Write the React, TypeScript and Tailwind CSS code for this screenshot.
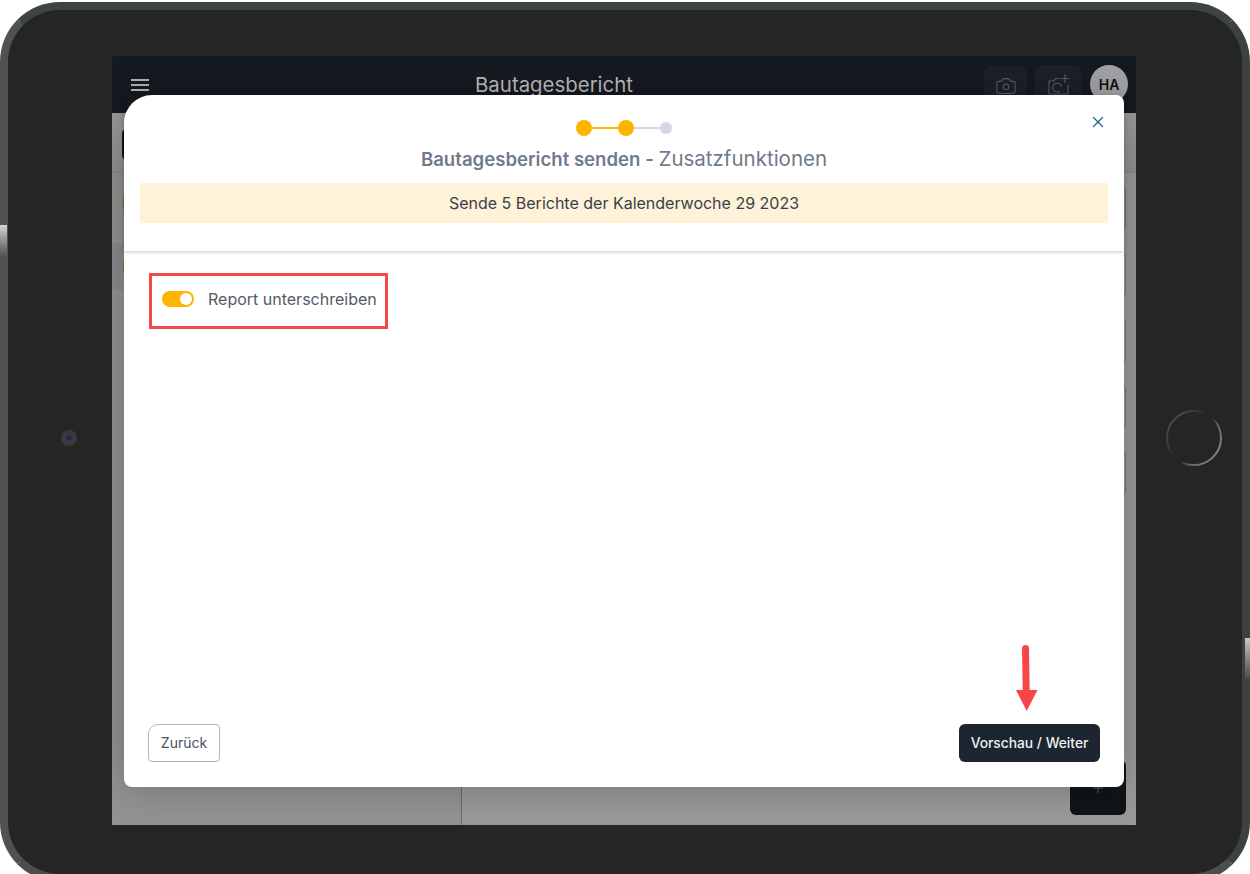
import { Camera, X, Plus } from "lucide-react";

const font = { fontFamily: "Inter, 'Liberation Sans', sans-serif" };

function CameraPlus() {
  return (
    <svg width="24" height="24" viewBox="0 0 24 24" fill="none" stroke="currentColor" strokeWidth="1.2">
      <path d="M12 5.5H8.5L7 8H2v13h19v-9" />
      <path d="M14.5 13.5a4.5 4.5 0 1 0-1.5 4.5" />
      <path d="M18 1v9M13.5 5.5h9" />
    </svg>
  );
}

function BackgroundApp() {
  return (
    <div className="flex flex-col h-full bg-[#999999]">
      <div className="h-[57px] shrink-0 bg-[#151a21] flex items-start justify-between pl-[19px] pr-[8px] pt-[10px] relative">
        <div className="flex flex-col gap-[3px] mt-[13px]">
          <div className="w-[18px] h-[2px] bg-[#b4b4b4]" />
          <div className="w-[18px] h-[2px] bg-[#b4b4b4]" />
          <div className="w-[18px] h-[2px] bg-[#b4b4b4]" />
        </div>
        <div className="absolute left-0 w-[884px] top-[16px] text-center text-[20.4px] leading-[26px] text-[#bdbdbd]">Bautagesbericht</div>
        <div className="flex items-start gap-[8px] mt-[-1px]">
          <div className="w-[43px] h-[40px] mt-[1px] rounded-[8px] bg-[#1b2129] flex justify-center pt-[9px] text-[#595c61]">
            <Camera className="w-[22px] h-[22px]" strokeWidth={1.2} />
          </div>
          <div className="w-[47px] h-[40px] rounded-[8px] bg-[#1b2129] flex justify-center pt-[8px] text-[#595c61]">
            <CameraPlus />
          </div>
          <div className="w-[38px] h-[38px] rounded-full bg-[#a3a3a6] flex items-center justify-center text-[14px] font-semibold text-[#101010]">HA</div>
        </div>
      </div>
      <div className="h-[60px] shrink-0 bg-gradient-to-b from-[#9c9c9e] to-[#8f9092] border-b border-[#868686] pt-[15px] pl-[10px]">
        <div className="w-[20px] h-[33px] bg-[#101216] rounded-[6px]" />
      </div>
      <div className="flex-1 flex min-h-0">
        <div className="w-[350px] shrink-0 border-r border-[#6a6a6a] bg-[#939393]">
          <div className="h-[70px] pl-[11px] pt-[24px]">
            <div className="w-[2px] h-[12px] bg-[#8a6a2c]" />
          </div>
          <div className="h-[47px] bg-[#8a8b8e] pl-[11px] pt-[18px]">
            <div className="w-[2px] h-[12px] bg-[#8a6a2c]" />
          </div>
        </div>
        <div className="flex-1 flex flex-col items-end pr-[10px] pt-[12px] gap-[19px] relative">
          {[47, 47, 47, 47, 48].map((h, i) => (
            <div key={i} className="w-[40px] rounded-[6px] border border-[#77787c]" style={{ height: h }} />
          ))}
          <div className="absolute right-[10px] bottom-[10px] w-[56px] h-[55px] rounded-[6px] bg-[#101419] flex items-center justify-center text-[#5d6064]">
            <Plus className="w-[16px] h-[16px]" strokeWidth={1.5} />
          </div>
        </div>
      </div>
    </div>
  );
}

function Modal() {
  return (
    <div className="absolute left-[12px] top-[39px] w-[1000px] h-[692px] bg-white rounded-tl-[28px] rounded-tr-[8px] rounded-b-[8px] flex flex-col shadow-[0_0_40px_rgba(0,0,0,0.25)]">
      <div className="h-[156px] shrink-0 px-[16px] pt-[25px] relative shadow-[0_1px_4px_rgba(0,0,0,0.22)]">
        <X className="absolute right-[17px] top-[18px] w-[18px] h-[18px] text-[#1f6587]" strokeWidth={1.7} />
        <div className="flex items-center justify-center h-[16px]">
          <div className="w-[16px] h-[16px] rounded-full bg-[#ffb400]" />
          <div className="w-[26px] h-[2px] bg-[#ffb400]" />
          <div className="w-[16px] h-[16px] rounded-full bg-[#ffb400]" />
          <div className="w-[26px] h-[2px] bg-[#d2d7e1]" />
          <div className="w-[12px] h-[12px] rounded-full bg-[#d2d7e1]" />
        </div>
        <div className="mt-[10px] text-center leading-[26px] text-[#6f7a8a]">
          <span className="font-semibold text-[18.6px]">Bautagesbericht senden - </span>
          <span className="text-[20.5px]">Zusatzfunktionen</span>
        </div>
        <div className="mt-[10px] h-[40px] bg-[#fef3d9] flex items-center justify-center text-[16px] text-[#3a4048]">
          Sende 5 Berichte der Kalenderwoche 29 2023
        </div>
      </div>
      <div className="flex-1 min-h-0 flex flex-col justify-between px-[24px] pt-[22px] pb-[25px]">
        <div className="self-start relative left-[1px] flex items-center gap-[14px] h-[56px] pl-[10px] pr-[8px] pb-[5px] border-[3px] border-[#f44848]">
          <div className="w-[32px] h-[16px] rounded-full bg-[#ffb400] flex items-center justify-end pr-[2px]">
            <div className="w-[12px] h-[12px] rounded-full bg-white" />
          </div>
          <span className="text-[16px] text-[#525a66]">Report unterschreiben</span>
        </div>
        <div className="flex items-end justify-between">
          <button className="w-[72px] h-[38px] pb-[1px] rounded-tl-[10px] rounded-tr-[4px] rounded-b-[4px] border border-[#aab5c5] bg-white text-[14px] text-[#4a5160]">Zurück</button>
          <div className="relative">
            <svg className="absolute left-[56px] top-[-80px]" width="24" height="68" viewBox="0 0 24 68">
              <path d="M10.5 4.5 L11.2 47" stroke="#f84646" strokeWidth="7" strokeLinecap="round" fill="none" />
              <path d="M1 46 H22.5 L11.7 67 Z" fill="#f84646" />
            </svg>
            <button className="w-[141px] h-[38px] rounded-[6px] bg-[#1c2530] text-[13.8px] font-medium text-[#eef0f2]">Vorschau / Weiter</button>
          </div>
        </div>
      </div>
    </div>
  );
}

export default function App() {
  return (
    <div className="w-[1250px] h-[874px] bg-white overflow-hidden relative" style={font}>
      <div className="mt-[2px] h-[880px] rounded-[60px] border-[8px] border-t-[#3e4343] border-l-[#4f534f] border-r-[#3c4243] border-b-[#4c4e50] bg-[#252525] pl-[104px] pr-[106px] pt-[46px] pb-[49px] relative">
        <div className="h-[769px] relative overflow-hidden">
          <BackgroundApp />
          <Modal />
        </div>
        {/* camera */}
        <div className="absolute left-[53px] top-[420px] w-[16px] h-[16px] rounded-full bg-[#3a3a3a] flex items-center justify-center">
          <div className="w-[8px] h-[8px] rounded-full bg-[#2a2840] border border-[#3f3a66]" />
        </div>
        {/* home button */}
        <svg className="absolute left-[1157px] top-[399px]" width="58" height="58" viewBox="0 0 58 58" fill="none">
          <defs>
            <linearGradient id="ring" x1="0.1" y1="0.2" x2="0.9" y2="0.8">
              <stop offset="0" stopColor="#4a4a4a" />
              <stop offset="0.22" stopColor="#3a3a3a" />
              <stop offset="0.42" stopColor="#252525" />
              <stop offset="0.55" stopColor="#252525" />
              <stop offset="0.72" stopColor="#666666" />
              <stop offset="1" stopColor="#808080" />
            </linearGradient>
          </defs>
          <circle cx="29" cy="29" r="27" stroke="url(#ring)" strokeWidth="2" />
        </svg>
      </div>
      {/* side buttons */}
      <div className="absolute left-0 top-[225px] w-[7px] h-[32px] bg-gradient-to-b from-[#d4d4d4] to-[#4f534f]" />
      <div className="absolute right-0 top-[638px] w-[5px] h-[40px] bg-gradient-to-b from-[#c8c8c8] to-[#4b4f4d]" />
    </div>
  );
}
